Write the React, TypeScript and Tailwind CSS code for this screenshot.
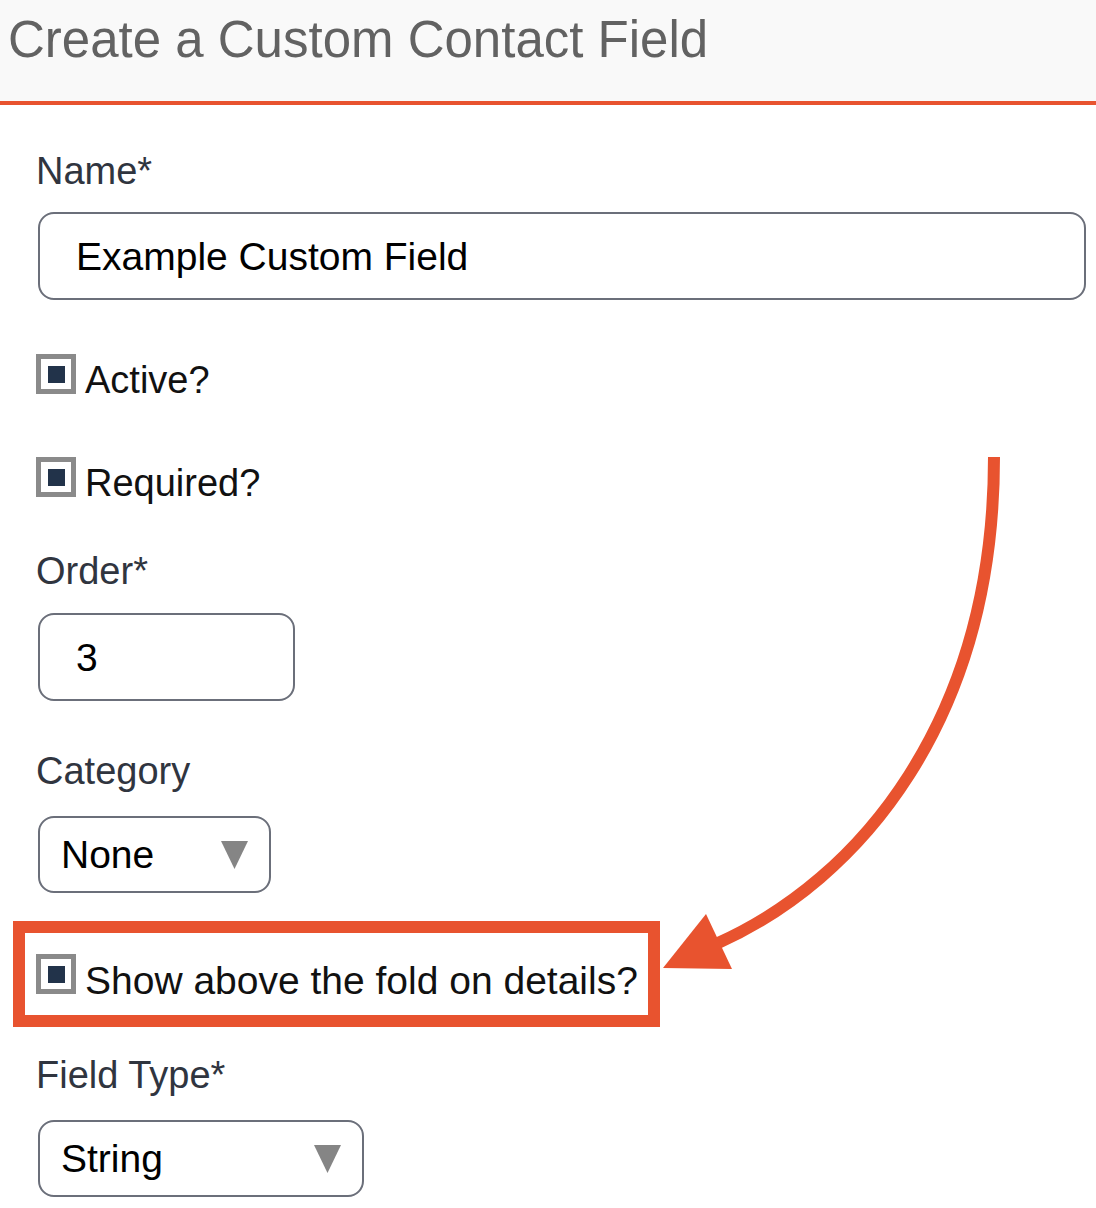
import React from "react";

const RED = "#e8532f";

function Check({ label, size }: { label: string; size: string }) {
  return (
    <div className="flex items-start h-[40px]">
      <div className="w-[40px] h-[40px] border-[5px] border-[#8a8a8a] bg-white flex items-center justify-center shrink-0">
        <div className="w-[17px] h-[17px] bg-[#22334a]" />
      </div>
      <span className={`ml-[9px] mt-[7px] leading-none whitespace-nowrap text-[#111111] ${size}`}>{label}</span>
    </div>
  );
}

function Label({ children }: { children: React.ReactNode }) {
  return <div className="text-[38px] leading-none text-[#30353f]">{children}</div>;
}

function Select({ value, width }: { value: string; width: string }) {
  return (
    <div
      className={`ml-[2px] h-[77px] ${width} border-2 border-[#6b6f7a] rounded-[16px] flex items-center justify-between pl-[21px] pr-[21px]`}
    >
      <span className="text-[39px] leading-none text-black">{value}</span>
      <svg width="27" height="28" viewBox="0 0 27 28">
        <polygon points="0,0 27,0 13.5,28" fill="#858585" />
      </svg>
    </div>
  );
}

export default function App() {
  return (
    <div className="relative w-[1096px] h-[1208px] bg-white overflow-hidden font-['Liberation_Sans',Arial,sans-serif]">
      {/* header */}
      <div className="h-[105px] bg-[#f9f9f9] border-b-4 border-[#e8532f] pl-[8px] pt-[14px]">
        <h1 className="text-[51px] leading-none text-[#626262] font-normal">Create a Custom Contact Field</h1>
      </div>

      {/* form */}
      <div className="pl-[36px] flex flex-col">
        <div className="mt-[47px]">
          <Label>Name*</Label>
        </div>
        <div className="mt-[22px] ml-[2px] w-[1048px] h-[88px] border-2 border-[#6b6f7a] rounded-[16px] flex items-center pl-[36px]">
          <span className="text-[39px] leading-none text-black">Example Custom Field</span>
        </div>

        <div className="mt-[54px]">
          <Check label="Active?" size="text-[38px]" />
        </div>
        <div className="mt-[63px]">
          <Check label="Required?" size="text-[38px]" />
        </div>

        <div className="mt-[55px]">
          <Label>Order*</Label>
        </div>
        <div className="mt-[23px] ml-[2px] w-[257px] h-[88px] border-2 border-[#6b6f7a] rounded-[16px] flex items-center pl-[36px]">
          <span className="text-[39px] leading-none text-black">3</span>
        </div>

        <div className="mt-[51px]">
          <Label>Category</Label>
        </div>
        <div className="mt-[26px]">
          <Select value="None" width="w-[233px]" />
        </div>

        <div className="mt-[28px] ml-[-23px] w-[647px] h-[106px] border-[12px] border-[#e8532f] pl-[11px] pt-[21px]">
          <Check label="Show above the fold on details?" size="text-[39px]" />
        </div>

        <div className="mt-[29px]">
          <Label>Field Type*</Label>
        </div>
        <div className="mt-[26px]">
          <Select value="String" width="w-[326px]" />
        </div>
      </div>

      {/* annotation arrow */}
      <svg className="absolute left-0 top-0 pointer-events-none" width="1096" height="1208" viewBox="0 0 1096 1208">
        <path d="M994 457 C994 720 860 880 716 944" fill="none" stroke={RED} strokeWidth="12" />
        <polygon points="706,914 663,968 732,969" fill={RED} />
      </svg>
    </div>
  );
}
